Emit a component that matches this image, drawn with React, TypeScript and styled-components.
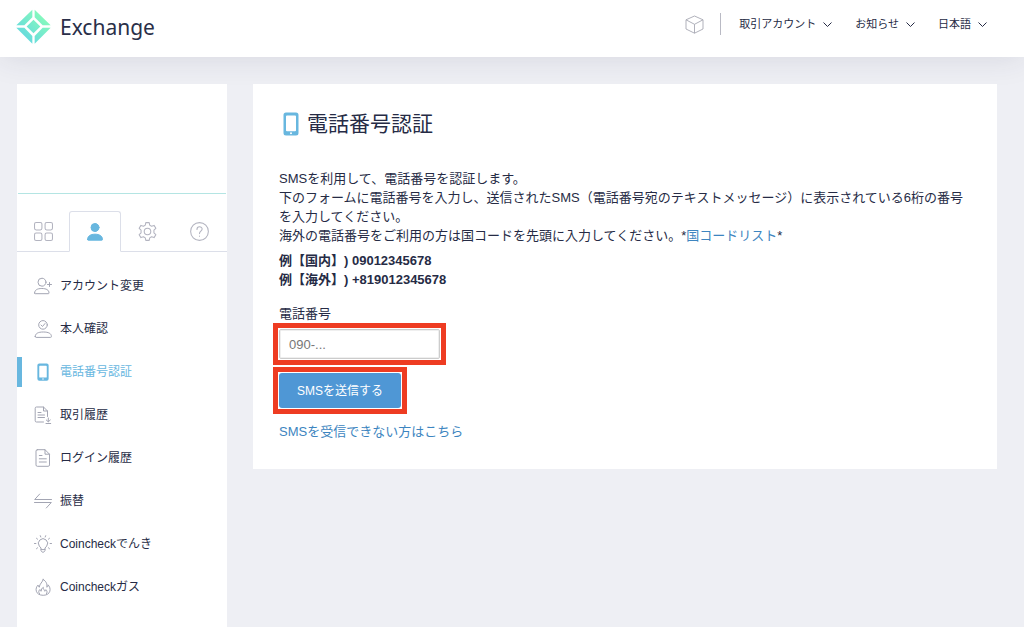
import React from 'react';
import styled, { createGlobalStyle, css } from 'styled-components';

const color = {
  ink: '#262b45',
  icon: '#b3b4c0',
  active: '#68b7df',
  link: '#3d85c0',
  line: '#dcdfe9',
  page: '#eeeff4',
  mark: '#ee3c22',
};

const GlobalStyle = createGlobalStyle`
  *, *::before, *::after { box-sizing: border-box; }
  body {
    margin: 0;
    background: ${color.page};
    color: ${color.ink};
    font: 13px/19px 'Liberation Sans', 'Noto Sans CJK JP', sans-serif;
    text-spacing-trim: space-all;
  }
  button, input { font-family: inherit; }
  svg { display: block; flex: none; }
`;

const Page = styled.div`
  display: flex;
  flex-direction: column;
  min-height: 100vh;
`;

const Header = styled.header`
  display: flex;
  justify-content: space-between;
  height: 57px;
  padding: 0 37px 0 16px;
  background: #fff;
  box-shadow: 0 0 32px rgba(40, 45, 70, 0.12);
`;

const Brand = styled.a`
  display: flex;
  align-items: center;
  gap: 9px;
  height: 53px;
  color: #2a2f49;
  font: 21px/30px 'Noto Sans', sans-serif;
  text-decoration: none;
`;

const TopNav = styled.nav`
  display: flex;
  align-items: center;
  height: 48px;
`;

const Divider = styled.span`
  width: 1px;
  height: 22px;
  margin: 0 18px 0 16px;
  background: #b9bac4;
`;

const MenuList = styled.div`
  display: flex;
  gap: 23px;
`;

const PlainButton = styled.button`
  display: flex;
  align-items: center;
  padding: 0;
  border: 0;
  background: none;
  color: inherit;
  cursor: pointer;
`;

const MenuButton = styled(PlainButton)`
  gap: 7px;
  font-size: 11px;
  line-height: 18px;
`;

const Layout = styled.div`
  display: flex;
  flex: 1;
  gap: 26px;
  padding: 27px 27px 0 17px;
`;

const Sidebar = styled.aside`
  flex: 0 0 210px;
  background: #fff;
`;

const Summary = styled.div`
  height: 110px;
  margin: 0 1px;
  border-bottom: 1px solid #b4e5e3;
`;

const Tabs = styled.div`
  display: flex;
  margin-top: 17px;

  &::after {
    content: '';
    flex: 1;
    border-bottom: 1px solid ${color.line};
  }
`;

const Tab = styled(PlainButton)<{ $active?: boolean }>`
  flex: 0 0 52px;
  justify-content: center;
  height: 41px;
  color: ${color.icon};
  border-bottom: 1px solid ${color.line};
  ${({ $active }) =>
    $active &&
    css`
      color: ${color.active};
      border: 1px solid ${color.line};
      border-bottom-color: transparent;
      border-radius: 3px 3px 0 0;
    `}
`;

const SideList = styled.ul`
  margin: 0;
  padding: 12px 0 0;
  list-style: none;
`;

const SideItem = styled.li`
  display: flex;
  align-items: center;
  height: 43px;
`;

const SideLink = styled.a<{ $active?: boolean }>`
  display: flex;
  flex: 1;
  align-items: center;
  gap: 8px;
  height: 30px;
  padding-left: 12px;
  border-left: 5px solid ${({ $active }) => ($active ? color.active : 'transparent')};
  color: ${({ $active }) => ($active ? color.active : color.ink)};
  font-size: 12px;
  line-height: 20px;
  text-decoration: none;

  svg { color: ${({ $active }) => ($active ? color.active : '#a3a5b3')}; }
`;

const Panel = styled.main`
  flex: 1;
  align-self: flex-start;
  min-width: 0;
  padding: 25px 26px 28px;
  background: #fff;
`;

const Title = styled.h1`
  display: flex;
  align-items: center;
  gap: 8px;
  margin: 0 0 30px;
  padding-left: 4px;
  font-size: 21px;
  font-weight: 400;
  line-height: 30px;

  svg { color: ${color.active}; }
`;

const Paragraph = styled.p`
  margin: 0;
`;

const Examples = styled.p`
  margin: 6px 0 15px;
  font-weight: 700;
`;

const Link = styled.a`
  color: ${color.link};
  text-decoration: none;
`;

const Form = styled.form`
  display: flex;
  flex-direction: column;
  align-items: flex-start;
`;

const Marked = styled.div`
  display: flex;
  outline: 5px solid ${color.mark};
  outline-offset: 1px;
`;

const Field = styled(Marked)`
  margin: 6px 0 14px;
`;

const PhoneInput = styled.input`
  width: 161px;
  height: 30px;
  padding: 0 9px;
  border: 1px solid #ccc;
  border-radius: 2px;
  box-shadow: inset 0 0 0 1px #efefef;
  color: ${color.ink};
  font-size: 13px;

  &::placeholder { color: #777; }
`;

const SubmitButton = styled.button`
  height: 35px;
  padding: 0 18px 2px;
  border: 0;
  border-radius: 3px;
  background: #4f97d5;
  color: #fff;
  font-size: 12px;
  cursor: pointer;
`;

const Help = styled(Paragraph)`
  margin-top: 14px;
`;

type IconProps = { size?: number; children: React.ReactNode };

const Icon = ({ size = 18, children }: IconProps) => (
  <svg width={size} height={size} viewBox="0 0 18 18" fill="none" stroke="currentColor"
    strokeLinecap="round" strokeLinejoin="round" aria-hidden="true">
    {children}
  </svg>
);

const Logo = () => (
  <svg width="35" height="35" viewBox="0 0 105 105" aria-hidden="true">
    <defs>
      <linearGradient id="mint" gradientUnits="userSpaceOnUse" x1="25" y1="85" x2="80" y2="25">
        <stop offset="0" stopColor="#66dbdd" />
        <stop offset="1" stopColor="#85f8be" />
      </linearGradient>
    </defs>
    <path fill="url(#mint)" d="M49 2V25L25 49H1zM56 2V25L80 49H104zM49 104V81L25 56H1zM56 104V81L80 56H104zM52.500 32L73 52.500L52.500 73L32 52.500z" />
  </svg>
);

const Chevron = () => (
  <svg width="9" height="9" viewBox="0 0 9 9" fill="none" stroke="currentColor" aria-hidden="true">
    <path d="M.5 2.500L4.500 6.500L8.500 2.500" />
  </svg>
);

const Cube = () => (
  <svg width="19" height="19" viewBox="0 0 19 19" fill="none" stroke="#a7a8b3" strokeWidth=".9" strokeLinejoin="round" aria-hidden="true">
    <path d="M9.500 1L18 4.800V14L9.500 18.200L1 14V4.800zM1 4.800L9.500 9.300L18 4.800M9.500 9.300V18.200" />
  </svg>
);

const Phone = ({ large }: { large?: boolean }) => (
  <svg width={large ? 16 : 18} height={large ? 24 : 18} viewBox={large ? '0 0 16 24' : '-4 0 24 24'}
    fill="currentColor" fillRule="evenodd" aria-hidden="true">
    <path d="M3 .5H13Q15.500 .5 15.500 3V21Q15.500 23.500 13 23.500H3Q.5 23.500 .5 21V3Q.5 .5 3 .5zM4 3.500Q3 3.500 3 4.500V18.500Q3 19.300 4 19.300H12Q13 19.300 13 18.500V4.500Q13 3.500 12 3.500zM8 20.300A1 1 0 1 0 8 22.300A1 1 0 1 0 8 20.300z" />
  </svg>
);

const tabs = [
  {
    label: 'ダッシュボード',
    icon: (
      <Icon size={19}>
        <rect x=".5" y=".5" width="7" height="7" rx="1.500" />
        <rect x="10.500" y=".5" width="7" height="7" rx="1.500" />
        <rect x=".5" y="10.500" width="7" height="7" rx="1.500" />
        <rect x="10.500" y="10.500" width="7" height="7" rx="1.500" />
      </Icon>
    ),
  },
  {
    label: 'アカウント',
    active: true,
    icon: (
      <Icon>
        <circle cx="9" cy="4.500" r="4" fill="currentColor" />
        <path fill="currentColor" d="M1.500 16.500C1.500 13 4.500 11.200 9 11.200S16.500 13 16.500 16.500Q16.500 17.200 15.800 17.200H2.200Q1.500 17.200 1.500 16.500z" />
      </Icon>
    ),
  },
  {
    label: '設定',
    icon: (
      <Icon size={19}>
        <circle cx="9" cy="9" r="3.100" />
        <path d="M7.400 .6H10.600L11.100 3L12.800 4L15.200 3.200L16.900 6L15.100 7.700V10.300L16.900 12L15.200 14.800L12.800 14L11.100 15L10.600 17.400H7.400L6.900 15L5.200 14L2.800 14.800L1.100 12L2.900 10.300V7.700L1.100 6L2.800 3.200L5.200 4L6.900 3z" />
      </Icon>
    ),
  },
  {
    label: 'ヘルプ',
    icon: (
      <Icon size={19}>
        <circle cx="9" cy="9" r="8.400" />
        <path d="M6.600 7C6.600 3.700 11.500 3.800 11.500 6.700C11.500 8.700 9 8.800 9 11M9 13.200V13.500" />
      </Icon>
    ),
  },
];

const items = [
  {
    label: 'アカウント変更',
    icon: (
      <Icon>
        <circle cx="8" cy="5.200" r="4" />
        <path d="M.6 16C.6 13 3.200 11.500 7.800 11.500S15 13 15 16Q15 16.700 14.300 16.700H1.300Q.6 16.700 .6 16zM13.500 7.500H17.500M15.500 5.500V9.500" />
      </Icon>
    ),
  },
  {
    label: '本人確認',
    icon: (
      <Icon>
        <circle cx="9" cy="4.900" r="4.300" />
        <path d="M1.200 16.500C1.200 13.500 4 12 9.300 12S17.400 13.500 17.400 16.500Q17.400 17.400 16.500 17.400H2.100Q1.200 17.400 1.200 16.500zM7 5L8.500 6.500L11 3.500" />
      </Icon>
    ),
  },
  { label: '電話番号認証', active: true, icon: <Phone /> },
  {
    label: '取引履歴',
    icon: (
      <Icon>
        <path d="M9.500 16H2.500Q1.200 16 1.200 14.700V2.300Q1.200 1 2.500 1H9.500L13.500 5V10.500M9.500 1V5H13.500M4 6.500H7M4 9H10.500M4 11.500H10.500M14.300 12V15.500M12.300 14L14.300 15.800L16.300 14M12 17.500H16.700" />
      </Icon>
    ),
  },
  {
    label: 'ログイン履歴',
    icon: (
      <Icon>
        <path d="M3.300 .7H11L15.500 5.200V15.900Q15.500 17.300 14.200 17.300H3.300Q2 17.300 2 15.900V2.100Q2 .7 3.300 .7zM11 .7V5.200H15.500M5.300 6.500H8M5.300 9.800H12.300M5.300 13H12.300" />
      </Icon>
    ),
  },
  {
    label: '振替',
    icon: (
      <Icon>
        <path d="M17.500 7.500H.7L5.700 2M.5 10.500H17.300L12.300 16" />
      </Icon>
    ),
  },
  {
    label: 'Coincheckでんき',
    icon: (
      <Icon>
        <path d="M7 14.200V13L5.300 11.100A4.600 4.600 0 1 1 12.700 11.100L11 13V14.200zM7 14.200V15.600L8.300 17.200H9.700L11 15.600V14.200M.5 8.500H1.900M16.100 8.500H17.500M2.500 3.300L3.600 4.200M15.500 3.300L14.400 4.200M6.300 .7L6.800 2M11.700 .7L11.200 2M2.500 13.700L3.600 12.800M15.500 13.700L14.400 12.800" />
      </Icon>
    ),
  },
  {
    label: 'Coincheckガス',
    icon: (
      <Icon>
        <path d="M9.200 1.500C8.700 4.200 5.500 5.700 5.300 9.200C4.300 8.800 4.200 7.600 4.200 7C.6 10 1.200 17.300 9.200 17.300C17 17.300 17.500 10 14 6.800C14.200 8 13.600 9 12.800 9.200C13.400 6 12.200 3.200 9.200 1.500zM5.500 15.800C3.800 13.700 5.200 12.200 5.900 11.500C6 12.500 6.500 13 7.200 13.200C7.200 11.500 8 10 9.300 9.300C9.200 11.200 10.400 11.800 10.700 13.200C11.500 13 11.800 12.300 11.900 11.700C13.300 13 13.400 14.500 12.500 15.800" />
      </Icon>
    ),
  },
];

const menus = ['取引アカウント', 'お知らせ', '日本語'];

export default function App() {
  return (
    <Page>
      <GlobalStyle />
      <Header>
        <Brand href="#">
          <Logo />
          Exchange
        </Brand>
        <TopNav>
          <PlainButton type="button" aria-label="サービス一覧">
            <Cube />
          </PlainButton>
          <Divider />
          <MenuList>
            {menus.map((label) => (
              <MenuButton type="button" key={label}>
                {label}
                <Chevron />
              </MenuButton>
            ))}
          </MenuList>
        </TopNav>
      </Header>
      <Layout>
        <Sidebar>
          <Summary />
          <Tabs role="tablist">
            {tabs.map(({ label, active, icon }) => (
              <Tab key={label} type="button" role="tab" aria-label={label} aria-selected={!!active} $active={active}>
                {icon}
              </Tab>
            ))}
          </Tabs>
          <SideList>
            {items.map(({ label, active, icon }) => (
              <SideItem key={label}>
                <SideLink href="#" $active={active}>
                  {icon}
                  {label}
                </SideLink>
              </SideItem>
            ))}
          </SideList>
        </Sidebar>
        <Panel>
          <Title>
            <Phone large />
            電話番号認証
          </Title>
          <Paragraph>
            SMSを利用して、電話番号を認証します。
            <br />
            下のフォームに電話番号を入力し、送信されたSMS（電話番号宛のテキストメッセージ）に表示されている6桁の番号を入力してください。
            <br />
            海外の電話番号をご利用の方は国コードを先頭に入力してください。*<Link href="#">国コードリスト</Link>*
          </Paragraph>
          <Examples>
            例【国内】) 09012345678
            <br />
            例【海外】) +819012345678
          </Examples>
          <Form onSubmit={(event) => event.preventDefault()}>
            <label htmlFor="phone">電話番号</label>
            <Field>
              <PhoneInput id="phone" type="tel" placeholder="090-..." />
            </Field>
            <Marked>
              <SubmitButton type="submit">SMSを送信する</SubmitButton>
            </Marked>
          </Form>
          <Help>
            <Link href="#">SMSを受信できない方はこちら</Link>
          </Help>
        </Panel>
      </Layout>
    </Page>
  );
}
